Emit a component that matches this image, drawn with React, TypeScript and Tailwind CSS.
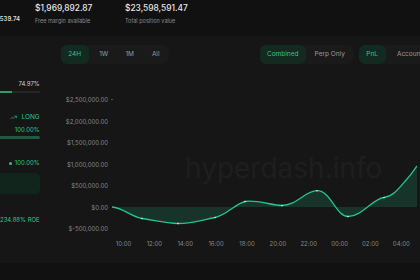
import { TrendingUp } from "lucide-react";

const yLabels = [
  "$2,500,000.00",
  "$2,000,000.00",
  "$1,500,000.00",
  "$1,000,000.00",
  "$500,000.00",
  "$0.00",
  "$-500,000.00",
];
const xLabels = ["10:00", "12:00", "14:00", "16:00", "18:00", "20:00", "22:00", "00:00", "02:00", "04:00"];

const line =
  "M115,207 C125,207.5 135,217 145,218.5 C158,220.5 170,223.5 181,223.5 C196,223.5 207,219.5 218,217.5 C230,215 238,204 248,201.5 C260,199.5 275,205.5 285,205.5 C300,205.5 308,190.7 320,190.7 C334,190.7 339,216.5 351,216.5 C365,216.5 375,199 387,197.5 C397,196 403,187 410,179 C414,175 417,170 420,166";

const dots: [number, number][] = [
  [145, 218.5],
  [181, 223.5],
  [218, 217.5],
  [248, 201.5],
  [285, 205.5],
  [320, 190.7],
  [351, 216.5],
  [387, 197.5],
];

function Chart() {
  return (
    <svg width={376} height={199} viewBox="44 64 376 199" className="block">
      <text x={188} y={178} fontFamily="Inter, sans-serif" fontSize={28} fill="#1e1e1e">
        hyperdash.info
      </text>
      {yLabels.map((l, i) => (
        <g key={l}>
          <line
            x1={116}
            x2={420}
            y1={99.5 + i * 21.5}
            y2={99.5 + i * 21.5}
            stroke="#1c1c1c"
            strokeWidth={0.6}
            strokeDasharray="1 3"
          />
          <text
            x={111}
            y={99.5 + i * 21.5}
            dominantBaseline="central"
            textAnchor="end"
            fontFamily="Inter, sans-serif"
            fontSize={6}
            fill="#878787"
          >
            {l}
          </text>
        </g>
      ))}
      <circle cx={115} cy={99.5} r={0.6} fill="#9a9a9a" />
      {xLabels.map((l, i) => (
        <text
          key={l}
          x={126.5 + i * 30.87}
          y={243}
          dominantBaseline="central"
          textAnchor="middle"
          fontFamily="Inter, sans-serif"
          fontSize={6}
          fill="#878787"
        >
          {l}
        </text>
      ))}
      <path d={line + " L420,207 L115,207 Z"} fill="#22c58c" fillOpacity={0.17} />
      <path d={line} fill="none" stroke="#22c58c" strokeWidth={1.3} />
      {dots.map(([x, y]) => (
        <circle key={x} cx={x} cy={y} r={0.8} fill="#d5f5e8" />
      ))}
    </svg>
  );
}

export default function App() {
  return (
    <div className="w-[420px] h-[280px] overflow-hidden bg-[#111111] font-['Inter',sans-serif] text-[#e6e6e6]">
      {/* top stats */}
      <div className="h-[36px] flex">
        <div className="w-[20px] overflow-hidden flex justify-end">
          <span className="mt-[15px] text-[6px] leading-[8px] font-semibold whitespace-nowrap text-[#dcdcdc]">
            $2,539.74
          </span>
        </div>
        <div className="ml-[15px] w-[90px] flex flex-col">
          <span className="mt-[3px] text-[8.4px] leading-[10px] font-medium whitespace-nowrap">$1,969,892.87</span>
          <span className="mt-[5px] text-[5.5px] leading-[7px] text-[#8a8a8a] whitespace-nowrap">Free margin available</span>
        </div>
        <div className="flex flex-col">
          <span className="mt-[3px] text-[8.4px] leading-[10px] font-medium whitespace-nowrap">$23,598,591.47</span>
          <span className="mt-[5px] text-[5.5px] leading-[7px] text-[#8a8a8a] whitespace-nowrap">Total position value</span>
        </div>
      </div>

      {/* main panel */}
      <div className="h-[227px] bg-[#161616] flex">
        {/* left column */}
        <div className="w-[44px] pr-[1px] flex flex-col items-stretch">
          <div className="mt-[44px] text-[6px] leading-[8px] text-right text-[#cfcfcf]">74.97%</div>
          <div className="mt-[3px] h-[2px] bg-[#262626] rounded-r-full">
            <div className="h-full w-[12px] bg-[#2a9c6f]" />
          </div>
          <div className="mt-[20px] h-[8px] flex items-center justify-end gap-[4px] text-[#2cc58c]">
            <TrendingUp size={7} strokeWidth={2} />
            <span className="text-[6.5px] leading-[8px]">LONG</span>
          </div>
          <div className="mt-[5px] text-[6px] leading-[8px] text-right text-[#2cc58c]">100.00%</div>
          <div className="mt-[2px] h-[3px] bg-[#1f5a42] rounded-r-full" />
          <div className="mt-[20px] h-[8px] flex items-center justify-end gap-[3px]">
            <div className="w-[3px] h-[3px] rounded-full bg-[#2cc58c]" />
            <span className="text-[6px] leading-[8px] text-[#2cc58c]">100.00%</span>
          </div>
          <div className="mt-[6px] h-[21px] rounded-r-[5px] bg-[#12251c]" />
          <div className="mt-[22px] h-[8px] text-[6px] leading-[8px] text-right text-[#2cc58c] whitespace-nowrap">
            234.88% ROE
          </div>
        </div>

        {/* chart column */}
        <div className="flex-1 flex flex-col">
          <div className="mt-[9px] h-[19px] flex pl-[20px] text-[6.5px] text-[#9a9a9a]">
            <div className="flex w-[108px] h-full rounded-[7px] bg-[#1a1a1a]">
              <div className="w-[28px] h-full rounded-[6px] bg-[#132a20] text-[#2cc58c] flex items-center justify-center">24H</div>
              <div className="ml-[2px] w-[26px] flex items-center justify-center">1W</div>
              <div className="w-[26px] flex items-center justify-center">1M</div>
              <div className="w-[26px] flex items-center justify-center">All</div>
            </div>
            <div className="ml-[91px] flex w-[94px] h-full rounded-[7px] bg-[#1a1a1a]">
              <div className="w-[46px] h-full rounded-[6px] bg-[#132a20] text-[#2cc58c] flex items-center justify-center">Combined</div>
              <div className="w-[48px] flex items-center justify-center whitespace-nowrap">Perp Only</div>
            </div>
            <div className="ml-[5px] flex w-[80px] h-full rounded-[7px] bg-[#1a1a1a]">
              <div className="w-[27px] h-full rounded-[6px] bg-[#132a20] text-[#2cc58c] flex items-center justify-center">PnL</div>
              <div className="w-[48px] flex items-center justify-center">Account</div>
            </div>
          </div>
          <Chart />
        </div>
      </div>
    </div>
  );
}
